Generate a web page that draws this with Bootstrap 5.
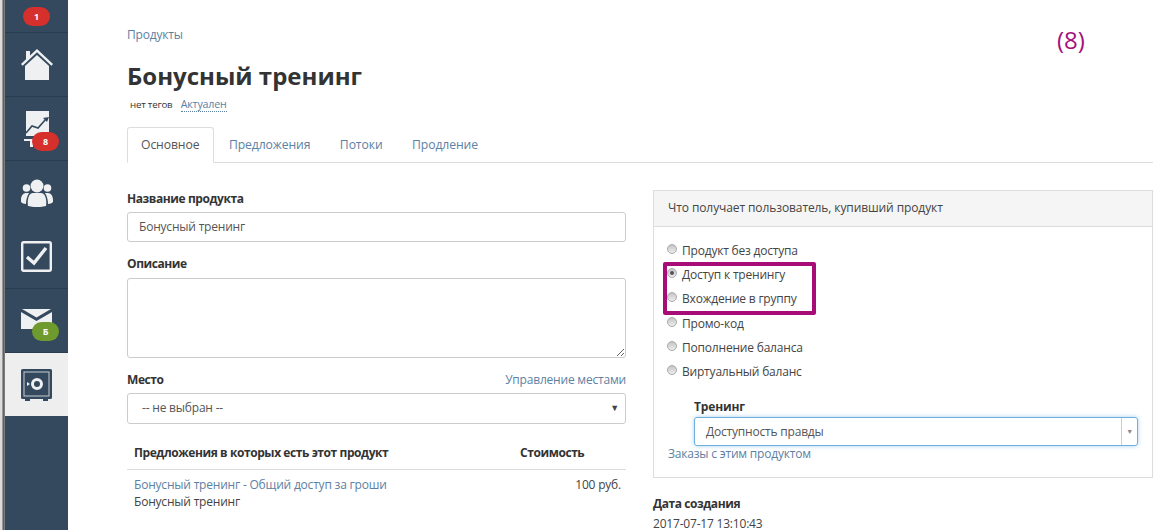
<!DOCTYPE html>
<html lang="ru"><head><meta charset="utf-8"><title>Бонусный тренинг</title>
<link rel="stylesheet" href="https://cdn.jsdelivr.net/npm/bootstrap@5.3.0/dist/css/bootstrap.min.css">
<style>
html,body{height:530px;overflow:hidden}
body{font-family:"Open Sans","Liberation Sans",sans-serif;font-size:12px;color:#444;background:#fff;position:relative;letter-spacing:-.2px}
a{color:#5d81a3;text-decoration:none}
.edge{width:5px;flex:none;background:linear-gradient(90deg,#dcdcdc 0,#dcdcdc 2px,#555 3px,#888 5px)}
.rail{width:63px;flex:none;background:#34495e;height:530px}
.slot{height:64px;border-bottom:1px solid #2a3c4e;display:flex;align-items:center;justify-content:center;position:relative}
.slot.first{height:33px}
.slot.on{background:#eee;border-bottom:0;height:63px}
.slot.flat{border-bottom-color:#34495e}
.pill{position:absolute;width:27px;height:19px;border-radius:10px;color:#fff;font-size:9px;font-weight:700;display:flex;align-items:center;justify-content:center;letter-spacing:0}
.pill.red{background:#d5302c}.pill.green{background:#6f9a2e}
.pane{width:1026px;margin-left:59px;flex:none}
.crumb{padding-top:26px;line-height:17px;font-size:12px}
.title{font-size:24px;font-weight:700;color:#333;margin:18px 0 0;line-height:30px;letter-spacing:0}
.meta{margin:5px 0 0 3px;line-height:16px;height:16px;font-size:9.7px;color:#333}
.meta a{font-size:10.7px;margin-left:6px;border-bottom:1px dotted #5d81a3;letter-spacing:-.2px}
.tabs{margin-top:15px;border-bottom:1px solid #ddd;height:36px;gap:.5px}
.tabs .nav-link{color:#5d81a3;font-size:12.2px;padding:7px 14px 9px 13px;height:36px;line-height:19px;border-radius:3px 3px 0 0;letter-spacing:-.1px}
.tabs .nav-link.active{color:#555;border-color:#ddd #ddd #fff}
.cols{margin-top:27px;gap:27px}
.lcol{width:499px;flex:none}.rcol{width:500px;flex:none}
.lbl{font-weight:700;color:#333;font-size:12px;line-height:17px;margin-bottom:5px;letter-spacing:-.42px}
.fld{border:1px solid #ccc;border-radius:3px;height:30px;padding:0 11px;line-height:28px;color:#555;margin-bottom:13px}
textarea.area{display:block;width:100%;height:80px;border:1px solid #ccc;border-radius:3px;margin:6px 0 13px}
.sel{display:flex;justify-content:space-between;padding:0 6px 0 14px;height:31px}
.sel i{font-style:normal;font-size:9px;color:#444}
.tbl{margin-top:10px}
.thead{display:flex;font-weight:700;color:#333;padding:7px 7px 8px;line-height:17px;border-bottom:1px solid #ddd;letter-spacing:-.42px}
.tbody{display:flex;padding:6px 5px 6px 7px;line-height:17px}
.c1{width:386px}.c2{flex:1}
.box{border:1px solid #ddd;height:288px}
.boxh{background:#f5f5f5;border-bottom:1px solid #ddd;height:36px;line-height:34px;padding-left:14px;font-size:12px;color:#444;letter-spacing:-.1px}
.opts{padding-top:11px;padding-left:13px}
.opt{height:24.3px;display:flex;align-items:center;gap:5px;line-height:17px}
.dot{width:10px;height:10px;border-radius:50%;flex:none;margin-top:-3px;background:linear-gradient(#c4c4c4,#eee);border:1px solid #aaa;display:flex;align-items:center;justify-content:center}
.dot.sel1:after{content:"";width:4px;height:4px;background:#555;border-radius:50%}
.sub{margin:14px 14px 0 40px}
.sub .lbl{margin-bottom:2px;letter-spacing:-.15px}
.combo{height:29px;border:1px solid #6fb1dc;border-radius:3px;box-shadow:0 0 4px rgba(102,175,233,.6);display:flex;line-height:27px;padding-left:11px;color:#555}
.combo span{flex:1}
.combo b{width:16px;border-left:1px solid #ccc;font-size:7px;font-weight:400;color:#888;text-align:center}
.orders{display:block;margin-left:14px;line-height:17px;margin-top:-1px}
.dates{margin-top:17px}
.dates .lbl{margin-bottom:3px}
.mark8{position:absolute;left:1057px;top:26px;font-size:24px;color:#a3117a;line-height:28px;letter-spacing:0}
.hi{position:absolute;left:663px;top:262px;width:153px;height:53px;border:4px solid #a80d77;border-radius:2px;pointer-events:none}
</style></head>
<body>
<div class="d-flex">
<div class="edge"></div>
<nav class="rail">
<div class="slot first"><span class="pill red" style="left:18px;top:7px">1</span></div>
<div class="slot"><svg width="32" height="31" viewBox="0 0 32 31"><path fill="#eef0f1" d="M16 0 32 15l-1.600 1.700L16 3.300 1.600 16.700 0 15l5-4.700V2h4v4.600z"/><path fill="#eef0f1" d="M16 6 28 17v14H4V17z"/></svg></div>
<div class="slot"><svg width="26" height="36" viewBox="0 0 26 36"><path fill="#eef0f1" d="M2 0h23v25H2z"/><path fill="none" stroke="#34495e" stroke-width="1.600" d="M2 22l6-7 6 2 8-9"/><path fill="#34495e" d="M25 6l-6 1 4 4z"/><path fill="#eef0f1" d="M0 28h14v2H9v6H6v-6H0z"/></svg><span class="pill red" style="left:27px;top:35px">8</span></div>
<div class="slot flat"><svg width="32" height="28" viewBox="0 0 32 28"><g fill="#eef0f1"><circle cx="16" cy="7" r="6.500"/><circle cx="5.500" cy="9" r="3.800"/><circle cx="26.500" cy="9" r="3.800"/><path d="M7 27c-1-7 1-13 5-13h8c4 0 6 6 5 13-5 1.500-13 1.500-18 0z"/><path d="M0 21c0-4 2-7 5-7h3c-2 3-3 7-3 11-2 0-4-1-5-2zM32 21c0-4-2-7-5-7h-3c2 3 3 7 3 11 2 0 4-1 5-2z"/></g></svg></div>
<div class="slot"><svg width="31" height="31" viewBox="0 0 31 31"><rect x="1.200" y="1.200" width="28.600" height="28.600" rx="1.500" fill="none" stroke="#eef0f1" stroke-width="2.400"/><path d="M6 16l7 6L25 7" fill="none" stroke="#eef0f1" stroke-width="3.400"/></svg></div>
<div class="slot"><svg width="31" height="20" viewBox="0 0 31 20" style="margin-top:-3px"><path fill="#eef0f1" d="M0 3l15.500 9L31 3v17H0z"/><path fill="#eef0f1" d="M1 0h29L15.500 8.500z"/></svg><span class="pill green" style="left:27px;top:33px">Б</span></div>
<div class="slot on"><svg width="31" height="32" viewBox="0 0 31 32"><path fill="#34495e" d="M1.500 0h28A1.500 1.500 0 0 1 31 1.500v27a1.500 1.500 0 0 1-1.500 1.500H27v2h-5v-2H9v2H4v-2H1.500A1.500 1.500 0 0 1 0 28.500v-27A1.500 1.500 0 0 1 1.500 0z"/><rect x="3" y="3" width="25" height="24" fill="none" stroke="#c6ccd2" stroke-width="1"/><circle cx="16" cy="15" r="4.500" fill="none" stroke="#eef0f1" stroke-width="3"/><path fill="#eef0f1" d="M6 13l3 2-3 2z"/></svg></div>
</nav>
<main class="pane">
<div class="crumb"><a href="#">Продукты</a></div>
<h1 class="title">Бонусный тренинг</h1>
<div class="meta">нет тегов <a href="#">Актуален</a></div>
<ul class="nav nav-tabs tabs">
<li class="nav-item"><a class="nav-link active" href="#">Основное</a></li>
<li class="nav-item"><a class="nav-link" href="#">Предложения</a></li>
<li class="nav-item"><a class="nav-link" href="#">Потоки</a></li>
<li class="nav-item"><a class="nav-link" href="#">Продление</a></li>
</ul>
<div class="d-flex cols">
<section class="lcol">
<div class="lbl">Название продукта</div>
<div class="fld">Бонусный тренинг</div>
<div class="lbl">Описание</div>
<textarea class="area"></textarea>
<div class="d-flex justify-content-between"><div class="lbl">Место</div><a href="#">Управление местами</a></div>
<div class="fld sel">-- не выбран --<i>▼</i></div>
<div class="tbl">
<div class="thead"><div class="c1">Предложения в которых есть этот продукт</div><div class="c2">Стоимость</div></div>
<div class="tbody"><div class="c1"><a href="#">Бонусный тренинг - Общий доступ за гроши</a><br>Бонусный тренинг</div><div class="c2 text-end">100 руб.</div></div>
</div>
</section>
<section class="rcol">
<div class="box">
<div class="boxh">Что получает пользователь, купивший продукт</div>
<div class="opts">
<div class="opt"><span class="dot"></span>Продукт без доступа</div>
<div class="opt"><span class="dot sel1"></span>Доступ к тренингу</div>
<div class="opt"><span class="dot"></span>Вхождение в группу</div>
<div class="opt"><span class="dot"></span>Промо-код</div>
<div class="opt"><span class="dot"></span>Пополнение баланса</div>
<div class="opt"><span class="dot"></span>Виртуальный баланс</div>
</div>
<div class="sub"><div class="lbl">Тренинг</div><div class="combo"><span>Доступность правды</span><b>▼</b></div></div>
<a class="orders" href="#">Заказы с этим продуктом</a>
</div>
<div class="dates"><div class="lbl">Дата создания</div><div>2017-07-17 13:10:43</div></div>
</section>
</div>
</main>
</div>
<div class="mark8">(8)</div>
<div class="hi"></div>
</body></html>
